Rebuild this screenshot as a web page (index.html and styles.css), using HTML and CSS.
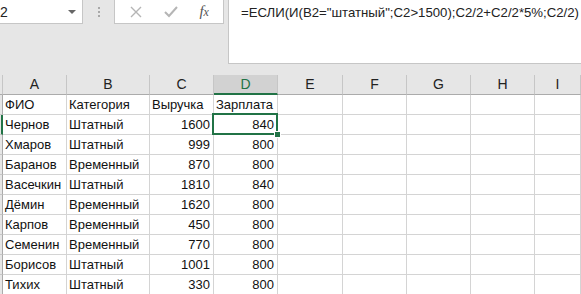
FILE: index.html
```html
<!DOCTYPE html>
<html lang="ru">
<head>
    <meta charset="UTF-8">
    <title>Зарплата</title>
    <link rel="stylesheet" href="styles.css">
</head>
<body>

<div class="formula-row">
    <div class="name-box">
        <span class="name-text">D2</span>
        <span class="drop-arrow"></span>
    </div>
    <div class="grip">
        <span></span><span></span><span></span>
    </div>
    <div class="fx-buttons">
        <svg class="btn-icon" width="14" height="14" viewBox="0 0 14 14">
            <path d="M2 2 L12 12 M12 2 L2 12" stroke="#b5b5b5" stroke-width="1.4" fill="none"/>
        </svg>
        <svg class="btn-icon" width="16" height="14" viewBox="0 0 16 14">
            <path d="M2 7 L6 11 L14 2" stroke="#b5b5b5" stroke-width="2" fill="none"/>
        </svg>
        <span class="fx">f<i>x</i></span>
    </div>
    <div class="formula-bar">=ЕСЛИ(И(B2="штатный";C2&gt;1500);C2/2+C2/2*5%;C2/2)</div>
</div>

<div class="sheet">
    <div class="hd corner"></div>
    <div class="hd">A</div>
    <div class="hd">B</div>
    <div class="hd">C</div>
    <div class="hd active">D</div>
    <div class="hd">E</div>
    <div class="hd">F</div>
    <div class="hd">G</div>
    <div class="hd">H</div>
    <div class="hd">I</div>

    <div class="rh"></div>
    <div class="c">ФИО</div><div class="c">Категория</div><div class="c">Выручка</div><div class="c">Зарплата</div>
    <div class="c"></div><div class="c"></div><div class="c"></div><div class="c"></div><div class="c"></div>

    <div class="rh active"></div>
    <div class="c">Чернов</div><div class="c">Штатный</div><div class="c n">1600</div><div class="c n selected">840</div>
    <div class="c"></div><div class="c"></div><div class="c"></div><div class="c"></div><div class="c"></div>

    <div class="rh"></div>
    <div class="c">Хмаров</div><div class="c">Штатный</div><div class="c n">999</div><div class="c n">800</div>
    <div class="c"></div><div class="c"></div><div class="c"></div><div class="c"></div><div class="c"></div>

    <div class="rh"></div>
    <div class="c">Баранов</div><div class="c">Временный</div><div class="c n">870</div><div class="c n">800</div>
    <div class="c"></div><div class="c"></div><div class="c"></div><div class="c"></div><div class="c"></div>

    <div class="rh"></div>
    <div class="c">Васечкин</div><div class="c">Штатный</div><div class="c n">1810</div><div class="c n">840</div>
    <div class="c"></div><div class="c"></div><div class="c"></div><div class="c"></div><div class="c"></div>

    <div class="rh"></div>
    <div class="c">Дёмин</div><div class="c">Временный</div><div class="c n">1620</div><div class="c n">800</div>
    <div class="c"></div><div class="c"></div><div class="c"></div><div class="c"></div><div class="c"></div>

    <div class="rh"></div>
    <div class="c">Карпов</div><div class="c">Временный</div><div class="c n">450</div><div class="c n">800</div>
    <div class="c"></div><div class="c"></div><div class="c"></div><div class="c"></div><div class="c"></div>

    <div class="rh"></div>
    <div class="c">Семенин</div><div class="c">Временный</div><div class="c n">770</div><div class="c n">800</div>
    <div class="c"></div><div class="c"></div><div class="c"></div><div class="c"></div><div class="c"></div>

    <div class="rh"></div>
    <div class="c">Борисов</div><div class="c">Штатный</div><div class="c n">1001</div><div class="c n">800</div>
    <div class="c"></div><div class="c"></div><div class="c"></div><div class="c"></div><div class="c"></div>

    <div class="rh"></div>
    <div class="c">Тихих</div><div class="c">Штатный</div><div class="c n">330</div><div class="c n">800</div>
    <div class="c"></div><div class="c"></div><div class="c"></div><div class="c"></div><div class="c"></div>
</div>

</body>
</html>
```

FILE: styles.css
```css
body {
    margin: 0;
    background-color: #e6e6e6;
    font-family: "Liberation Sans", Arial, sans-serif;
    overflow: hidden;
}

.formula-row {
    display: flex;
    align-items: flex-start;
    height: 64px;
    margin-bottom: 11px;
}

.name-box {
    width: 83px;
    height: 24px;
    box-sizing: border-box;
    background: white;
    border-right: 1px solid #c6c6c6;
    border-bottom: 1px solid #c6c6c6;
    display: flex;
    align-items: center;
    justify-content: space-between;
    padding-right: 6px;
    overflow: hidden;
}

.name-text {
    font-size: 14px;
    color: #222;
    margin-left: -10px;
}

.drop-arrow {
    width: 0;
    height: 0;
    border-left: 4px solid transparent;
    border-right: 4px solid transparent;
    border-top: 4px solid #666;
}

.grip {
    width: 31px;
    height: 24px;
    display: flex;
    flex-direction: column;
    align-items: center;
    justify-content: center;
    gap: 2px;
}

.grip span {
    width: 2px;
    height: 2px;
    background: #a8a8a8;
}

.fx-buttons {
    width: 110px;
    height: 24px;
    box-sizing: border-box;
    background: white;
    border-left: 1px solid #c6c6c6;
    border-right: 1px solid #c6c6c6;
    border-bottom: 1px solid #c6c6c6;
    display: flex;
    align-items: center;
    justify-content: space-around;
    padding: 0 4px;
}

.fx {
    font-family: "Liberation Serif", serif;
    font-style: italic;
    font-size: 15px;
    color: #555;
}

.fx i {
    font-size: 12px;
}

.formula-bar {
    flex: 1;
    height: 64px;
    box-sizing: border-box;
    margin-left: 4px;
    background: white;
    border-left: 1px solid #c6c6c6;
    border-bottom: 1px solid #c6c6c6;
    padding: 5px 0 0 12px;
    font-size: 13.2px;
    color: #222;
    white-space: nowrap;
    overflow: hidden;
}

.sheet {
    display: grid;
    grid-template-columns: 3px 64px 83px 64px 64px 65px 64px 64px 64px 1fr;
    grid-auto-rows: 20px;
    font-size: 13px;
    color: #111;
}

.hd {
    background: #e6e6e6;
    border-right: 1px solid #c6c6c6;
    border-bottom: 1px solid #ababab;
    text-align: center;
    line-height: 19px;
    font-size: 14px;
    color: #222;
}

.hd.active {
    background: #d2d2d2;
    color: #217346;
    border-bottom: 2px solid #217346;
    line-height: 18px;
}

.rh {
    background: #e6e6e6;
    border-right: 1px solid #ababab;
    border-bottom: 1px solid #c6c6c6;
}

.rh.active {
    border-right: 2px solid #217346;
}

.c {
    background: white;
    border-right: 1px solid #d4d4d4;
    border-bottom: 1px solid #d4d4d4;
    padding: 0 3px 0 2px;
    line-height: 20px;
    white-space: nowrap;
    overflow: hidden;
}

.n {
    text-align: right;
}

.selected {
    position: relative;
    overflow: visible;
}

.selected::after {
    content: "";
    position: absolute;
    left: -2px;
    top: -2px;
    right: -1px;
    bottom: -1px;
    border: 2px solid #217346;
}

.selected::before {
    content: "";
    position: absolute;
    right: -4px;
    bottom: -4px;
    width: 5px;
    height: 5px;
    background: #217346;
    border: 1px solid white;
    z-index: 1;
}
```
